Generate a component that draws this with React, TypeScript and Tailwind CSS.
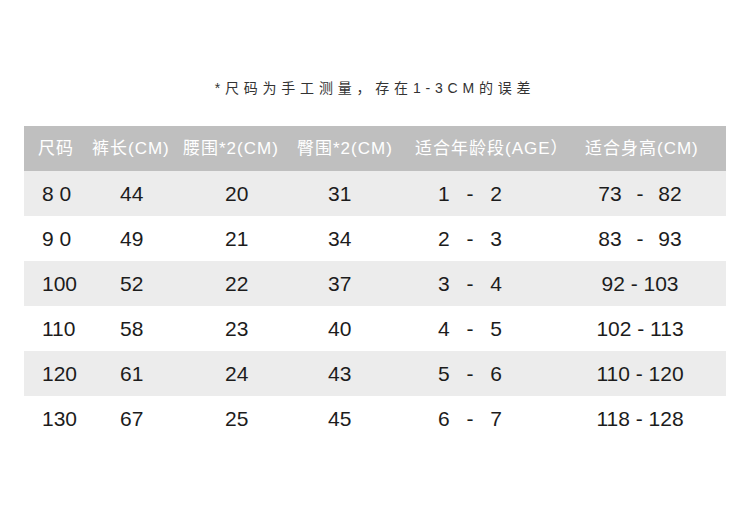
import React from 'react';

const headers = [
  { label: '尺码', cls: 'w-[62px] pl-[14px]' },
  { label: '裤长(CM)', cls: 'w-[92px] pl-[6px]' },
  { label: '腰围*2(CM)', cls: 'w-[112px] pl-[5px]' },
  { label: '臀围*2(CM)', cls: 'w-[115px] pl-[7px]' },
  { label: '适合年龄段(AGE）', cls: 'w-[171px] pl-[10px]' },
  { label: '适合身高(CM)', cls: 'w-[150px] pl-[9px]' },
];

const cellCls = [
  'w-[62px] pl-[18px]',
  'w-[92px] pl-[34px]',
  'w-[112px] pl-[47px]',
  'w-[115px] pl-[38px]',
  'w-[171px] pl-[33px] [word-spacing:11px]',
  'w-[150px] text-center pr-[22px]',
];

const rows = [
  ['8 0', '44', '20', '31', '1 - 2', '73 - 82'],
  ['9 0', '49', '21', '34', '2 - 3', '83 - 93'],
  ['100', '52', '22', '37', '3 - 4', '92 - 103'],
  ['110', '58', '23', '40', '4 - 5', '102 - 113'],
  ['120', '61', '24', '43', '5 - 6', '110 - 120'],
  ['130', '67', '25', '45', '6 - 7', '118 - 128'],
];

export default function App() {
  return (
    <div className="w-[750px] h-[510px] bg-white font-['Liberation_Sans','Noto_Sans_CJK_SC',sans-serif]">
      {/* note */}
      <p className="pt-[78px] text-center text-[14px] leading-[20px] tracking-[4.8px] text-[#333]">
        *尺码为手工测量，存在1-3CM的误差
      </p>

      {/* size table */}
      <div className="mx-[24px] mt-[28px] w-[702px]">
        <div className="flex h-[45px] items-center bg-[#bfbfbf] text-[17px] text-white">
          {headers.map((h) => (
            <div key={h.label} className={`${h.cls} whitespace-nowrap tracking-[1px]`}>
              {h.label}
            </div>
          ))}
        </div>
        {rows.map((row, i) => (
          <div
            key={i}
            className={`flex h-[45px] items-center text-[21px] text-[#1c1c1c] ${i % 2 === 0 ? 'bg-[#ececec]' : 'bg-white'}`}
          >
            {row.map((v, j) => (
              <div
                key={j}
                className={`${cellCls[j]} ${j === 5 && v.length < 8 ? '[word-spacing:9px]' : ''} whitespace-pre`}
              >
                {v}
              </div>
            ))}
          </div>
        ))}
      </div>
    </div>
  );
}
